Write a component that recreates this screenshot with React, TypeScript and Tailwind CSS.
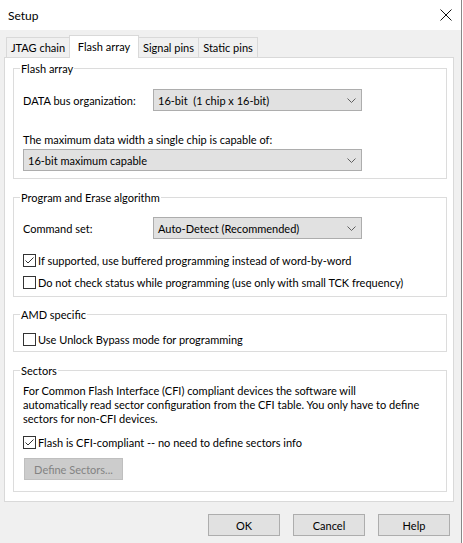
import React from "react";

function Chevron() {
  return (
    <svg width="9" height="5" viewBox="0 0 9 5" className="shrink-0">
      <path d="M0.5 0.5 L4.5 4.5 L8.5 0.5" stroke="#606060" strokeWidth="1" fill="none" />
    </svg>
  );
}

function Combo({ text, className }: { text: string; className: string }) {
  return (
    <div
      className={
        "h-[22px] flex items-center justify-between bg-[#e1e1e1] border border-[#adadad] pl-[4px] pr-[5px] " +
        className
      }
    >
      <span className="whitespace-pre leading-[15px]">{text}</span>
      <Chevron />
    </div>
  );
}

function CheckBox({ checked, label }: { checked?: boolean; label: string }) {
  return (
    <div className="flex items-center h-[15px]">
      <div className="w-[13px] h-[13px] border border-[#333333] bg-white flex items-center justify-center shrink-0">
        {checked && (
          <svg width="11" height="11" viewBox="0 0 11 11">
            <path d="M1.5 5.5 L4 8 L9.5 2.5" stroke="#333333" strokeWidth="1" fill="none" />
          </svg>
        )}
      </div>
      <span className="ml-[2px] whitespace-nowrap leading-[15px]">{label}</span>
    </div>
  );
}

function Group({
  title,
  className,
  children,
}: {
  title: string;
  className: string;
  children: React.ReactNode;
}) {
  return (
    <div className={"relative border border-[#dcdcdc] pl-[9px] " + className}>
      <span className="absolute -top-[8px] left-[6px] bg-white px-[1px] leading-[15px] whitespace-nowrap">
        {title}
      </span>
      {children}
    </div>
  );
}

function Button({ label }: { label: string }) {
  return (
    <div className="w-[72px] h-[22px] bg-[#e1e1e1] border border-[#adadad] flex items-center justify-center leading-[15px]">
      {label}
    </div>
  );
}

export default function App() {
  return (
    <div className="w-[462px] h-[543px] flex flex-col bg-[#f0f0f0] border-r border-[#888888] text-[11px] text-black font-['Lato',sans-serif]">
      {/* title bar */}
      <div className="h-[30px] bg-white flex items-center justify-between pl-[8px] pr-[9px] shrink-0">
        <span className="leading-[15px] text-[12px]">Setup</span>
        <svg width="12" height="12" viewBox="0 0 12 12">
          <path d="M0.5 0.5 L11.5 11.5 M11.5 0.5 L0.5 11.5" stroke="#111111" strokeWidth="1" />
        </svg>
      </div>

      <div className="flex flex-col pl-[4px] pt-[5px]">
        {/* tabs */}
        <div className="flex items-end h-[22px] pl-[2px]">
          <div className="w-[64px] h-[20px] border-t border-l border-r border-[#d9d9d9] bg-[#f0f0f0] flex items-center justify-center leading-[15px] whitespace-nowrap">
            JTAG chain
          </div>
          <div className="relative z-10 -ml-px w-[70px] h-[23px] -mb-px border-t border-l border-r border-[#d9d9d9] bg-white flex items-start justify-center pt-[3px] leading-[15px] whitespace-nowrap">
            Flash array
          </div>
          <div className="-ml-px w-[61px] h-[20px] border-t border-l border-r border-[#d9d9d9] bg-[#f0f0f0] flex items-center justify-center leading-[15px] whitespace-nowrap">
            Signal pins
          </div>
          <div className="-ml-px w-[60px] h-[20px] border-t border-l border-r border-[#d9d9d9] bg-[#f0f0f0] flex items-center justify-center leading-[15px] whitespace-nowrap">
            Static pins
          </div>
        </div>

        {/* tab page */}
        <div className="w-[450px] h-[445px] bg-white border border-[#d9d9d9] pl-[8px] pr-[6px] pt-[10px] flex flex-col">
          <Group title="Flash array" className="pt-[20px] pb-[7px]">
            <div className="flex items-center">
              <span className="w-[130px] leading-[15px] whitespace-nowrap">DATA bus organization:</span>
              <Combo text="16-bit  (1 chip x 16-bit)" className="w-[209px]" />
            </div>
            <div className="mt-[21px] leading-[15px]">The maximum data width a single chip is capable of:</div>
            <Combo text="16-bit maximum capable" className="mt-[2px] w-[339px]" />
          </Group>

          <Group title="Program and Erase algorithm" className="mt-[18px] pt-[19px] pb-[6px]">
            <div className="flex items-center">
              <span className="w-[130px] leading-[15px]">Command set:</span>
              <Combo text="Auto-Detect (Recommended)" className="w-[209px]" />
            </div>
            <div className="mt-[14px]">
              <CheckBox checked label="If supported, use buffered programming instead of word-by-word" />
            </div>
            <div className="mt-[7px]">
              <CheckBox label="Do not check status while programming (use only with small TCK frequency)" />
            </div>
          </Group>

          <Group title="AMD specific" className="mt-[17px] pt-[17px] pb-[4px]">
            <CheckBox label="Use Unlock Bypass mode for programming" />
          </Group>

          <Group title="Sectors" className="mt-[18px] pt-[13px] pb-[11px]">
            <p className="leading-[14px] whitespace-nowrap">
              For Common Flash Interface (CFI) compliant devices the software will
              <br />
              automatically read sector configuration from the CFI table. You only have to define
              <br />
              sectors for non-CFI devices.
            </p>
            <div className="mt-[9px]">
              <CheckBox checked label="Flash is CFI-compliant -- no need to define sectors info" />
            </div>
            <div className="mt-[8px] ml-px w-[99px] h-[22px] bg-[#cccccc] border border-[#bfbfbf] text-[#838383] flex items-center justify-center leading-[15px] whitespace-nowrap">
              Define Sectors...
            </div>
          </Group>
        </div>

        {/* dialog buttons */}
        <div className="flex justify-end gap-[13px] mt-[12px] pr-[11px]">
          <Button label="OK" />
          <Button label="Cancel" />
          <Button label="Help" />
        </div>
      </div>
    </div>
  );
}
